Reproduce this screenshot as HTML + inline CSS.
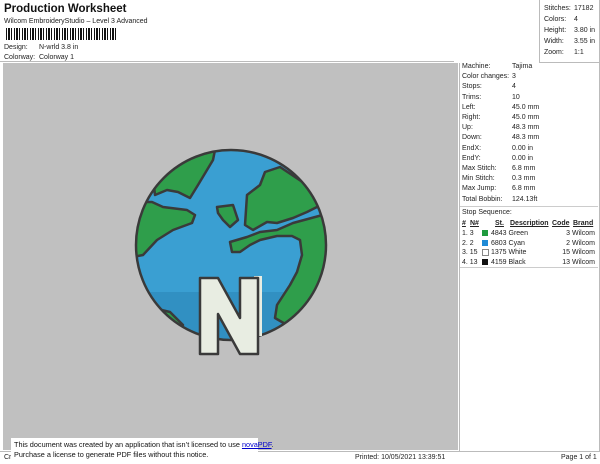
<!DOCTYPE html>
<html><head><style>
body{margin:0;width:600px;height:464px;background:#fff;font-family:"Liberation Sans",sans-serif;color:#222;position:relative;overflow:hidden}
.a{position:absolute;white-space:nowrap;font-size:7px;line-height:9px}
.bd{position:absolute;border:1px solid #bbb}
</style></head><body>
<div class="bd" style="left:0;top:0;width:454px;height:61px;border-width:0 0 1px 0"></div>
<div class="bd" style="left:539px;top:0;width:59px;height:62px;border-width:0 1px 1px 1px"></div>
<div class="a" style="left:4px;top:2px;font-size:11.5px;line-height:14px;font-weight:bold;color:#111">Production Worksheet</div>
<div class="a" style="left:4px;top:17px">Wilcom EmbroideryStudio – Level 3 Advanced</div>
<div style="position:absolute;left:6px;top:28px;width:112px;height:12px;background:repeating-linear-gradient(90deg,#111 0 1px,#fff 1px 2px,#111 2px 4px,#fff 4px 5px,#111 5px 6px,#fff 6px 8px)"></div>
<div class="a" style="left:4px;top:43px">Design:</div><div class="a" style="left:39px;top:43px">N-wrld 3.8 in</div>
<div class="a" style="left:4px;top:53px">Colorway:</div><div class="a" style="left:39px;top:53px">Colorway 1</div>

<div class="a" style="left:544px;top:3px;line-height:11px">Stitches:<br>Colors:<br>Height:<br>Width:<br>Zoom:</div>
<div class="a" style="left:574px;top:3px;line-height:11px">17182<br>4<br>3.80 in<br>3.55 in<br>1:1</div>

<div style="position:absolute;left:3px;top:63px;width:455px;height:387px;background:#c0c0c0"></div>
<div class="bd" style="left:459px;top:63px;width:139px;height:388px;border-width:0 1px 0 1px"></div>

<svg style="position:absolute;left:0;top:0" width="600" height="464">
<defs><clipPath id="c"><circle cx="231" cy="245" r="95"/></clipPath></defs>
<circle cx="231" cy="245" r="95" fill="#3a9fd2"/>
<g clip-path="url(#c)" stroke="#3a3a3a" stroke-width="2.5" stroke-linejoin="round">
<rect x="130" y="292" width="200" height="60" fill="#3190c2" stroke="none"/>
<path d="M150,150 L215,150 L213,160 L198,185 L190,198 L178,192 L167,190 L155,195 Z" fill="#2f9e4b"/>
<path d="M128,202 L152,202 L163,207 L187,210 L195,215 L192,223 L173,230 L157,240 L143,255 L128,258 Z" fill="#2f9e4b"/>
<path d="M217,207 L233,205 L238,220 L230,227 L223,220 L218,213 Z" fill="#2f9e4b"/>
<path d="M247,195 L260,185 L265,172 L280,167 L307,185 L330,200 L330,207 L317,207 L307,212 L293,218 L277,223 L267,222 L253,230 L245,225 Z" fill="#2f9e4b"/>
<path d="M230,242 L247,237 L260,232 L277,230 L293,223 L330,213 L335,280 L320,305 L287,325 L275,318 L277,305 L290,285 L297,272 L302,255 L300,240 L292,236 L277,236 L260,240 L250,245 L240,252 L232,252 Z" fill="#2f9e4b"/>
<path d="M128,308 L153,308 L170,312 L183,325 L178,340 L128,340 Z" fill="#2f9e4b"/>
</g>
<circle cx="231" cy="245" r="95" fill="none" stroke="#3a3a3a" stroke-width="2.5"/>
<rect x="254" y="276" width="8" height="60" fill="#e8ede2"/>
<path d="M200,278 L218,278 L240,318 L240,278 L258,278 L258,354 L240,354 L218,314 L218,354 L200,354 Z" fill="#e8ede2" stroke="#3a3a3a" stroke-width="2.5" stroke-linejoin="round"/>
</svg>

<div class="a" style="left:462px;top:62px;line-height:10.2px">Machine:<br>Color changes:<br>Stops:<br>Trims:<br>Left:<br>Right:<br>Up:<br>Down:<br>EndX:<br>EndY:<br>Max Stitch:<br>Min Stitch:<br>Max Jump:<br>Total Bobbin:</div>
<div class="a" style="left:512px;top:62px;line-height:10.2px">Tajima<br>3<br>4<br>10<br>45.0 mm<br>45.0 mm<br>48.3 mm<br>48.3 mm<br>0.00 in<br>0.00 in<br>6.8 mm<br>0.3 mm<br>6.8 mm<br>124.13ft</div>
<div style="position:absolute;left:460px;top:206px;width:138px;border-top:1px solid #ccc"></div>
<div class="a" style="left:462px;top:208px">Stop Sequence:</div>
<div class="a" style="left:462px;top:219px;font-weight:bold;text-decoration:underline">#</div>
<div class="a" style="left:470px;top:219px;font-weight:bold;text-decoration:underline">N#</div>
<div class="a" style="left:495px;top:219px;font-weight:bold;text-decoration:underline">St.</div>
<div class="a" style="left:510px;top:219px;font-weight:bold;text-decoration:underline">Description</div>
<div class="a" style="left:552px;top:219px;font-weight:bold;text-decoration:underline">Code</div>
<div class="a" style="left:573px;top:219px;font-weight:bold;text-decoration:underline">Brand</div>
<div class="a" style="left:462px;top:229px;line-height:9.5px">1. 3<br>2. 2<br>3. 15<br>4. 13</div>
<div style="position:absolute;left:482px;top:230px;width:6px;height:6px;background:#1f9a3e"></div>
<div style="position:absolute;left:482px;top:240px;width:6px;height:6px;background:#1e8ad6"></div>
<div style="position:absolute;left:482px;top:249px;width:5px;height:5px;border:1px solid #888;background:#fff"></div>
<div style="position:absolute;left:482px;top:259px;width:6px;height:6px;background:#111"></div>
<div class="a" style="left:491px;top:229px;line-height:9.5px">4843 Green<br>6803 Cyan<br>1375 White<br>4159 Black</div>
<div class="a" style="left:551px;top:229px;line-height:9.5px;width:19px;text-align:right">3<br>2<br>15<br>13</div>
<div class="a" style="left:572px;top:229px;line-height:9.5px">Wilcom<br>Wilcom<br>Wilcom<br>Wilcom</div>
<div style="position:absolute;left:460px;top:267px;width:138px;border-top:1px solid #ccc"></div>

<div style="position:absolute;left:0;top:451px;width:600px;border-top:1px solid #bbb"></div>
<div class="a" style="left:4px;top:453px">Cr</div>
<div class="a" style="left:355px;top:453px">Printed: 10/05/2021 13:39:51</div>
<div class="a" style="left:561px;top:453px">Page 1 of 1</div>
<div style="position:absolute;left:11px;top:438px;width:247px;height:26px;background:#fff"></div>
<div class="a" style="left:14px;top:440px;font-size:7.3px;line-height:10px;color:#111">This document was created by an application that isn’t licensed to use <span style="color:#00c;text-decoration:underline">novaPDF</span>.<br>Purchase a license to generate PDF files without this notice.</div>
</body></html>
